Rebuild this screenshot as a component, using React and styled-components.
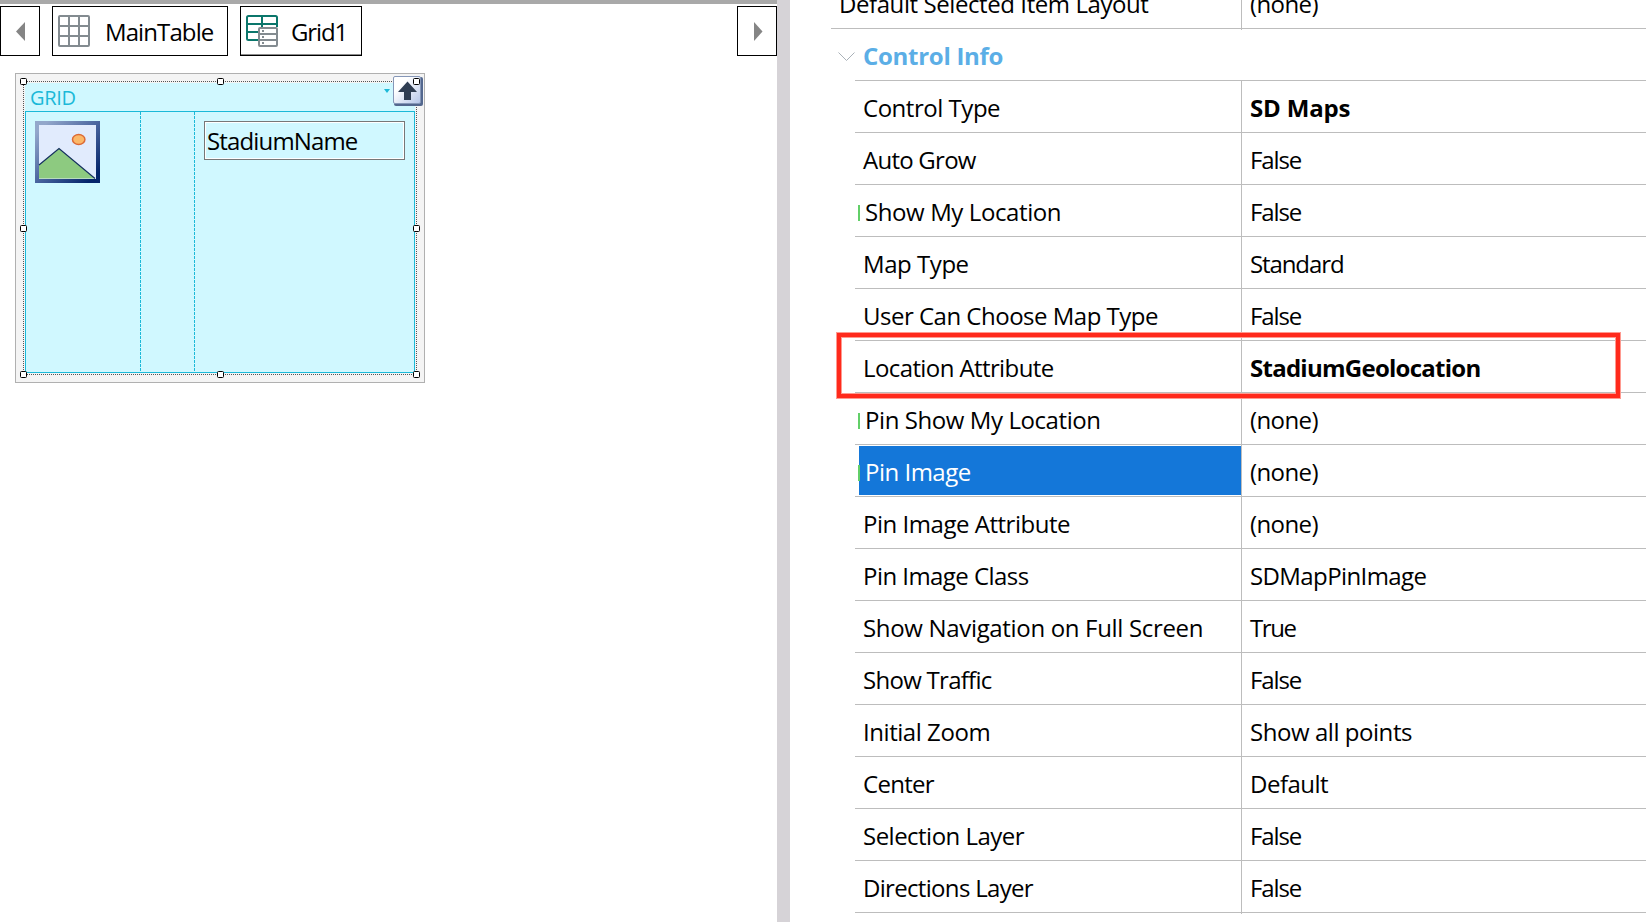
import React from 'react';
import styled, { createGlobalStyle, css } from 'styled-components';

const GlobalStyle = createGlobalStyle`
  *, *::before, *::after { box-sizing: border-box; }
  body {
    margin: 0;
    background: #fff;
    color: #000;
    font: 24px/32px 'Open Sans', 'Noto Sans', sans-serif;
    overflow: hidden;
  }
`;

const Page = styled.div`
  display: flex;
  width: 1646px;
  height: 922px;
  overflow: hidden;
`;

const Designer = styled.div`
  flex: 0 0 777px;
  border-top: 4px solid #a9a9a9;
`;

const Splitter = styled.div`
  flex: 0 0 13px;
  background: #d6d3d7;
`;

const Breadcrumbs = styled.div`
  display: flex;
  gap: 12px;
  margin-top: 2px;
`;

const Crumb = styled.button`
  display: flex;
  align-items: center;
  width: ${p => p.$width}px;
  height: 50px;
  padding: 0;
  border: 1px solid #000;
  background: #fff;
  color: #000;
  font: inherit;
  letter-spacing: ${p => p.$spacing || 0}px;
  box-shadow: ${p => (p.$current ? 'inset 0 -1px #8c8c8c' : 'none')};
  margin-left: ${p => (p.$end ? 'auto' : 0)};

  svg { flex: none; margin-left: ${p => p.$inset}px; }
  span { margin-left: ${p => p.$gap}px; padding-top: 2px; white-space: nowrap; }
`;

const Frame = styled.div`
  width: 410px;
  height: 310px;
  margin: 17px 0 0 15px;
  padding: 7px;
  border: 1px solid #b0b0b0;
  background: #f4f4f4;
`;

const Selection = styled.div`
  position: relative;
  width: 394px;
  height: 294px;
  padding: 2px 1px 1px 2px;

  > .outline { position: absolute; left: 0; top: 0; }
`;

const GridHead = styled.div`
  display: flex;
  justify-content: space-between;
  width: 390px;
  height: 28px;
  padding: 0 25px 0 5px;
  background: #d0f8ff;
  color: #1bb9d8;
  font-size: 20px;
  line-height: 29px;
  letter-spacing: -0.3px;
  svg { margin-top: 6px; }
`;

const GridBody = styled.div`
  display: flex;
  width: 390px;
  height: 262px;
  border: 1px solid #1bb9d8;
  background: #d0f8ff;
`;

const GridColumn = styled.div`
  width: ${p => p.$width}px;
  padding: 9px;
  ${p => p.$dashed && css`
    background: repeating-linear-gradient(#1bb9d8 0 3px, transparent 3px 4px) right top / 1px 100% no-repeat;
  `}
  svg { display: block; }
`;

const Field = styled.div`
  width: 201px;
  height: 39px;
  padding-left: 2px;
  border: 1px solid #777;
  box-shadow: inset 0 0 0 1px #fff;
  line-height: 38px;
  letter-spacing: -0.85px;
`;

const Handle = styled.i`
  position: absolute;
  left: ${p => p.$x - 3}px;
  top: ${p => p.$y - 3}px;
  width: 7px;
  height: 7px;
  border: 1px solid #000;
  border-radius: 1.5px;
  background: #fff;
`;

const UpButton = styled.div`
  position: absolute;
  left: 370px;
  top: -5px;
  width: 30px;
  height: 30px;
  svg { display: block; }
`;

const Properties = styled.div`
  position: relative;
  flex: 1;
  padding-left: 65px;
`;

const Row = styled.div`
  display: flex;
  height: 52px;
  border-bottom: 1px solid #bdbdbd;
`;

const ClippedRow = styled(Row)`
  margin: -23px 0 0 -24px;
`;

const Name = styled.div`
  position: relative;
  width: ${p => (p.$wide ? 410 : 386)}px;
  padding: 11px 0 0 ${p => (p.$marked ? 10 : 8)}px;
  white-space: nowrap;
  letter-spacing: ${p => p.$spacing || 0}px;
  ${p => p.$selected && css`
    color: #fff;
    background: linear-gradient(#1477d9, #1477d9) 4px 1px / 382px 49px no-repeat;
  `}
`;

const Marker = styled.i`
  position: absolute;
  left: 3px;
  top: 20px;
  width: 2px;
  height: 16px;
  background: #62cf68;
`;

const Value = styled.div`
  flex: 1;
  height: ${p => (p.$last ? 53 : 51)}px;
  padding: 11px 0 0 8px;
  border-left: 1px solid #bdbdbd;
  white-space: nowrap;
  font-weight: ${p => (p.$bold ? 700 : 400)};
  letter-spacing: ${p => p.$spacing || 0}px;
`;

const Category = styled(Row)`
  padding: 11px 0 0 8px;
  color: #5baee6;
  font-weight: 700;
  letter-spacing: -0.28px;
  svg { flex: none; margin: 12px 8px 0 -25px; }
`;

const Highlight = styled.div`
  position: absolute;
  left: 47px;
  top: 333px;
  width: 783px;
  height: 65px;
  border: 4px solid #ff2a1c;
  box-shadow: 0 0 0 1px #ff9a90, inset 0 0 0 1px #ff9a90;
`;

const rows = [
  { name: 'Control Type', ns: -0.47, value: 'SD Maps', vs: -0.18, bold: true },
  { name: 'Auto Grow', ns: -0.75, value: 'False', vs: -1.1 },
  { name: 'Show My Location', ns: -0.4, value: 'False', vs: -1.1, marked: true },
  { name: 'Map Type', ns: -0.45, value: 'Standard', vs: -1.1 },
  { name: 'User Can Choose Map Type', ns: -0.5, value: 'False', vs: -1.1 },
  { name: 'Location Attribute', ns: -0.6, value: 'StadiumGeolocation', vs: -0.74, bold: true },
  { name: 'Pin Show My Location', ns: -0.42, value: '(none)', vs: -0.6, marked: true },
  { name: 'Pin Image', ns: -0.5, value: '(none)', vs: -0.6, marked: true, selected: true },
  { name: 'Pin Image Attribute', ns: -0.47, value: '(none)', vs: -0.6 },
  { name: 'Pin Image Class', ns: -0.55, value: 'SDMapPinImage', vs: -0.6 },
  { name: 'Show Navigation on Full Screen', ns: -0.33, value: 'True', vs: -1.4 },
  { name: 'Show Traffic', ns: -0.72, value: 'False', vs: -1.1 },
  { name: 'Initial Zoom', ns: -0.45, value: 'Show all points', vs: -0.45 },
  { name: 'Center', ns: -0.7, value: 'Default', vs: -0.5 },
  { name: 'Selection Layer', ns: -0.52, value: 'False', vs: -1.1 },
  { name: 'Directions Layer', ns: -0.68, value: 'False', vs: -1.1 },
];

const handles = [[0, 0], [197, 0], [393, 0], [0, 147], [393, 147], [0, 293], [197, 293], [393, 293]];

const TableIcon = () => (
  <svg width="32" height="32" viewBox="0 0 32 32" fill="none" stroke="#838b90" strokeWidth="2">
    <rect x="1" y="1" width="30" height="30" rx="1" />
    <path d="M11 1v30M21 1v30M1 11h30M1 21h30" />
  </svg>
);

const GridIcon = () => (
  <svg width="32" height="32" viewBox="0 0 32 32" fill="none" strokeWidth="2">
    <path d="M13 25H2.500Q1 25 1 23.500V2.500Q1 1 2.500 1h27Q31 1 31 2.500V12M1 9h30M1 17h12M16 1v11" stroke="#0b766b" />
    <rect x="13" y="13" width="18" height="18" rx="1" fill="#fff" stroke="#838b90" />
    <path d="M13 19h18M13 25h18" stroke="#838b90" />
    <path d="M16 16h2M16 22h2M16 28h2" stroke="#838b90" />
  </svg>
);

const ImageIcon = () => (
  <svg width="65" height="62" viewBox="0 0 65 62">
    <defs>
      <linearGradient id="picFrame" x1="0" y1="0" x2="1" y2="1">
        <stop offset="0.1" stopColor="#93a7cb" />
        <stop offset="0.5" stopColor="#4a659f" />
        <stop offset="0.9" stopColor="#05256b" />
      </linearGradient>
    </defs>
    <rect width="65" height="62" fill="url(#picFrame)" />
    <rect x="4" y="4" width="57" height="54" fill="#e1ebfd" />
    <path d="M4 44L24 27.500L60 57.500H4z" fill="#8dca80" />
    <path d="M4 44L24 27.500L60 57.500" fill="none" stroke="#15305f" strokeWidth="1.200" />
    <ellipse cx="43.700" cy="18.500" rx="6.200" ry="5" fill="#fbb869" stroke="#dc6a36" strokeWidth="1.500" />
  </svg>
);

export default function App() {
  return (
    <>
      <GlobalStyle />
      <Page>
        <Designer>
          <Breadcrumbs>
            <Crumb $width={40} $inset={15}>
              <svg width="9" height="19" viewBox="0 0 9 19"><path d="M9 0v19L0 9.500z" fill="#858585" /></svg>
            </Crumb>
            <Crumb $width={176} $inset={5} $gap={15} $spacing={-0.9}><TableIcon /><span>MainTable</span></Crumb>
            <Crumb $width={122} $inset={5} $gap={13} $spacing={-1.1} $current><GridIcon /><span>Grid1</span></Crumb>
            <Crumb $width={40} $inset={16} $end>
              <svg width="9" height="19" viewBox="0 0 9 19"><path d="M0 0v19l8.500-9.500z" fill="#858585" /></svg>
            </Crumb>
          </Breadcrumbs>
          <Frame>
            <Selection>
              <svg className="outline" width="394" height="294" fill="none" stroke="#555" strokeDasharray="1 1">
                <path d="M0 .5h394M0 293.500h394M.5 0v294M393.500 0v294" />
              </svg>
              <GridHead>
                GRID
                <svg width="6" height="4" viewBox="0 0 6 4"><path d="M0 0h6L3 4z" fill="#1bb9d8" /></svg>
              </GridHead>
              <GridBody>
                <GridColumn $width={115} $dashed><ImageIcon /></GridColumn>
                <GridColumn $width={54} $dashed />
                <GridColumn $width={219}><Field>StadiumName</Field></GridColumn>
              </GridBody>
              <UpButton>
                <svg width="30" height="30" viewBox="0 0 30 30">
                  <defs>
                    <linearGradient id="upFace" x1="0" y1="0" x2="1" y2="1">
                      <stop offset="0.3" stopColor="#fff" />
                      <stop offset="1" stopColor="#b3c4e8" />
                    </linearGradient>
                  </defs>
                  <rect x="1" y="1" width="29" height="29" rx="2" fill="#53678e" />
                  <rect x=".5" y=".5" width="27" height="27" rx="1.500" fill="url(#upFace)" stroke="#8697b8" />
                  <path d="M14.500 5.500L24 16h-6v8h-7v-8H5z" fill="#2f3d52" />
                </svg>
              </UpButton>
              {handles.map(([x, y]) => <Handle key={`${x}-${y}`} $x={x} $y={y} />)}
            </Selection>
          </Frame>
        </Designer>
        <Splitter />
        <Properties>
          <ClippedRow>
            <Name $wide $spacing={-0.42}>Default Selected Item Layout</Name>
            <Value $last $spacing={-0.6}>(none)</Value>
          </ClippedRow>
          <Category>
            <svg width="17" height="10" viewBox="0 0 17 10" fill="none" stroke="#a9b1b8"><path d="M.5 .5l8 8 8-8" /></svg>
            Control Info
          </Category>
          {rows.map((r, i) => (
            <Row key={r.name}>
              <Name $marked={r.marked} $selected={r.selected} $spacing={r.ns}>
                {r.marked && <Marker />}
                {r.name}
              </Name>
              <Value $bold={r.bold} $spacing={r.vs} $last={i === rows.length - 1}>{r.value}</Value>
            </Row>
          ))}
          <Highlight />
        </Properties>
      </Page>
    </>
  );
}
